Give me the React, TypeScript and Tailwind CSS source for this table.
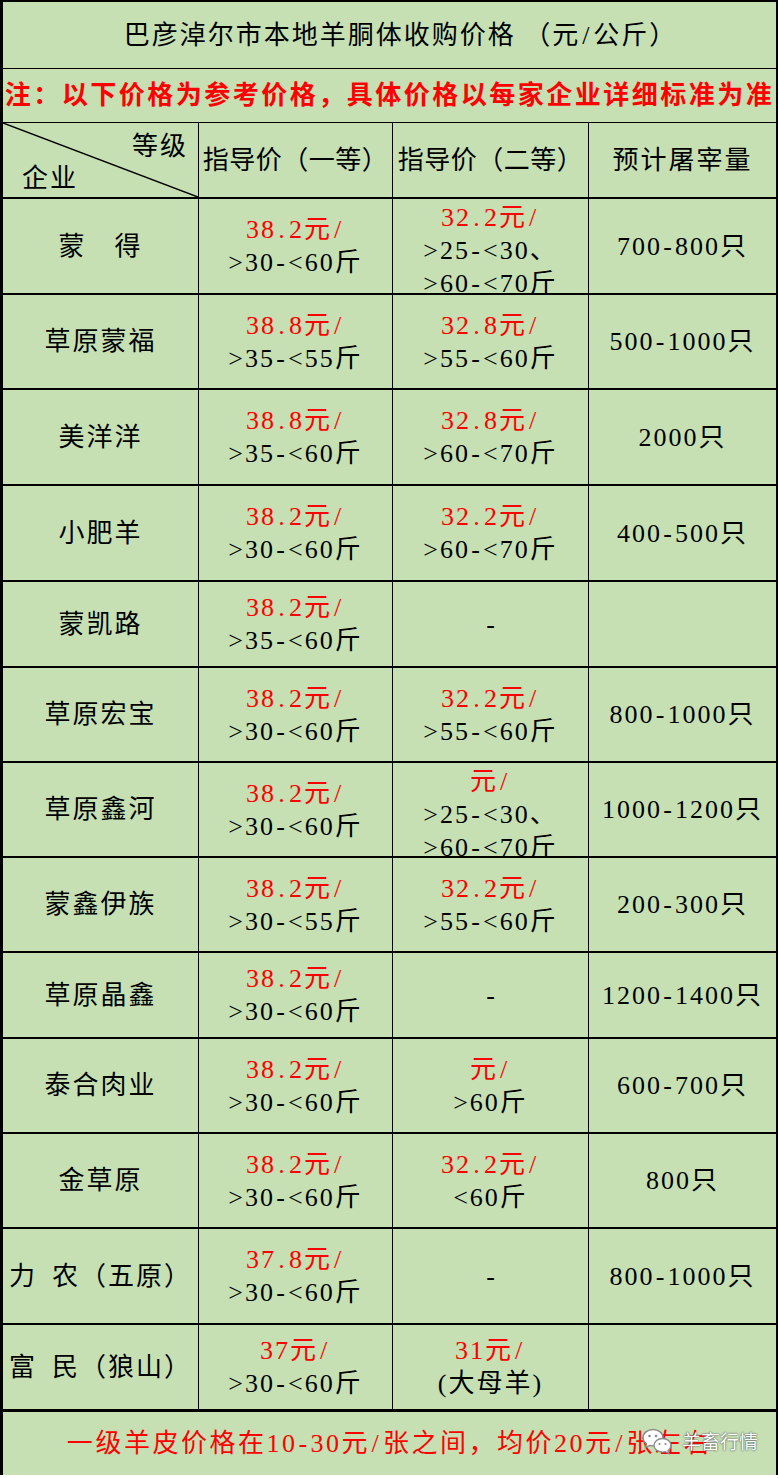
import React from 'react';
import clsx from 'clsx';

type Row = {
    name: string;
    first: string[];
    second: string[] | null; // null → "-"
    qty: string;
    h: string;
    tall?: boolean; // three lines in the second column, overflows the row
    last?: boolean;
};

const rows: Row[] = [
    { name: '蒙　得', first: ['38.2元/', '>30-<60斤'], second: ['32.2元/', '>25-<30、', '>60-<70斤'], qty: '700-800只', h: 'h-[96px]', tall: true },
    { name: '草原蒙福', first: ['38.8元/', '>35-<55斤'], second: ['32.8元/', '>55-<60斤'], qty: '500-1000只', h: 'h-[95px]' },
    { name: '美洋洋', first: ['38.8元/', '>35-<60斤'], second: ['32.8元/', '>60-<70斤'], qty: '2000只', h: 'h-[96px]' },
    { name: '小肥羊', first: ['38.2元/', '>30-<60斤'], second: ['32.2元/', '>60-<70斤'], qty: '400-500只', h: 'h-[96px]' },
    { name: '蒙凯路', first: ['38.2元/', '>35-<60斤'], second: null, qty: '', h: 'h-[86px]' },
    { name: '草原宏宝', first: ['38.2元/', '>30-<60斤'], second: ['32.2元/', '>55-<60斤'], qty: '800-1000只', h: 'h-[95px]' },
    { name: '草原鑫河', first: ['38.2元/', '>30-<60斤'], second: ['元/', '>25-<30、', '>60-<70斤'], qty: '1000-1200只', h: 'h-[95px]', tall: true },
    { name: '蒙鑫伊族', first: ['38.2元/', '>30-<55斤'], second: ['32.2元/', '>55-<60斤'], qty: '200-300只', h: 'h-[95px]' },
    { name: '草原晶鑫', first: ['38.2元/', '>30-<60斤'], second: null, qty: '1200-1400只', h: 'h-[86px]' },
    { name: '泰合肉业', first: ['38.2元/', '>30-<60斤'], second: ['元/', '>60斤'], qty: '600-700只', h: 'h-[95px]' },
    { name: '金草原', first: ['38.2元/', '>30-<60斤'], second: ['32.2元/', '<60斤'], qty: '800只', h: 'h-[95px]' },
    { name: '力\u2002农（五原）', first: ['37.8元/', '>30-<60斤'], second: null, qty: '800-1000只', h: 'h-[96px]' },
    { name: '富\u2002民（狼山）', first: ['37元/', '>30-<60斤'], second: ['31元/', '(大母羊)'], qty: '', h: 'h-[87px]', last: true },
];

const cols = 'grid grid-cols-[196px_194px_196px_187px]';

/* the sheet's font gives . / - a half-em box; widen them the same way */
const Txt: React.FC<{ s: string }> = ({ s }) => (
    <>
        {s.split('').map((c, i) =>
            c === '.' || c === '/' || c === '-' ? (
                <span key={i} className="inline-block w-[13px] text-center">
                    {c}
                </span>
            ) : (
                c
            )
        )}
    </>
);

/* price cell: first line red, the rest black */
const PriceCell: React.FC<{ lines: string[] | null; tall?: boolean }> = ({ lines, tall }) => (
    <div
        className={clsx(
            'flex flex-col items-center overflow-hidden border-r border-black',
            tall ? 'justify-start pt-[2px]' : 'justify-center'
        )}
    >
        {lines === null ? (
            <div className="leading-[33px] text-black">-</div>
        ) : (
            lines.map((l, i) => (
                <div
                    key={i}
                    className={clsx(
                        'whitespace-nowrap leading-[33px] tracking-[2px]',
                        i === 0 ? 'text-[#ff0000]' : 'text-black'
                    )}
                >
                    <Txt s={l} />
                </div>
            ))
        )}
    </div>
);

const WeChatIcon: React.FC = () => (
    <svg width="32" height="28" viewBox="0 0 32 28">
        <path
            d="M11 1.5c5.5 0 10 3.6 10 8.2s-4.5 8.2-10 8.2c-1.2 0-2.3-.2-3.3-.5L3.5 19.5l1-3.6C2.6 14.4 1 12.2 1 9.7 1 5.1 5.5 1.5 11 1.5z"
            fill="#fff"
            stroke="#8a8a8a"
            strokeWidth="1.4"
        />
        <circle cx="7.5" cy="8" r="1.3" fill="#8a8a8a" />
        <circle cx="14" cy="8" r="1.3" fill="#8a8a8a" />
        <path
            d="M20.5 10.5c4.7 0 8.5 3 8.5 6.8 0 2.1-1.2 4-3 5.2l.8 3-3.4-1.8c-.9.3-1.9.4-2.9.4-4.7 0-8.5-3-8.5-6.8s3.8-6.8 8.5-6.8z"
            fill="#fff"
            stroke="#8a8a8a"
            strokeWidth="1.4"
        />
        <circle cx="17.5" cy="16" r="1.1" fill="#8a8a8a" />
        <circle cx="23.5" cy="16" r="1.1" fill="#8a8a8a" />
    </svg>
);

export default function App() {
    return (
        <div className="min-h-[1478px] w-[779px] bg-white font-['Liberation_Serif','Noto_Sans_CJK_SC',serif] text-[26px] text-black">
            <div className="h-[1475px] w-[778px] border-t-2 border-r-2 border-l-[3px] border-black bg-[#c6e0b4]">
                {/* ── Title ── */}
                <div className="flex h-[67px] items-center justify-center border-b border-black pl-[22px] tracking-[2px] whitespace-nowrap">
                    巴彦淖尔市本地羊胴体收购价格 （元<Txt s="/" />公斤）
                </div>

                {/* ── Note ── */}
                <div className="flex h-[54px] items-center justify-center border-b border-black font-bold tracking-[2.5px] whitespace-nowrap text-[#ff0000]">
                    注：以下价格为参考价格，具体价格以每家企业详细标准为准
                </div>

                {/* ── Header ── */}
                <div className={clsx(cols, 'h-[76px] border-b-2 border-black')}>
                    <div className="relative flex flex-col border-r border-black pt-[8px] tracking-[2px]">
                        <svg className="absolute inset-0 h-full w-full" viewBox="0 0 195 74" preserveAspectRatio="none">
                            <line x1="0" y1="0" x2="195" y2="74" stroke="#000" strokeWidth="1.5" />
                        </svg>
                        <span className="relative self-end pr-[10px] leading-[32px]">等级</span>
                        <span className="relative self-start pl-[19px] leading-[32px]">企业</span>
                    </div>
                    <div className="flex items-center justify-center border-r border-black tracking-[0.5px] whitespace-nowrap">
                        指导价（一等）
                    </div>
                    <div className="flex items-center justify-center border-r border-black tracking-[0.5px] whitespace-nowrap">
                        指导价（二等）
                    </div>
                    <div className="flex items-center justify-center tracking-[2px] whitespace-nowrap">预计屠宰量</div>
                </div>

                {/* ── Rows ── */}
                {rows.map(r => (
                    <div
                        key={r.name}
                        className={clsx(cols, r.h, 'border-black', r.last ? 'border-b-[3px]' : 'border-b-2')}
                    >
                        <div className="flex items-center justify-center border-r border-black tracking-[2px] whitespace-nowrap">
                            {r.name}
                        </div>
                        <PriceCell lines={r.first} />
                        <PriceCell lines={r.second} tall={r.tall} />
                        <div className="flex items-center justify-center tracking-[2px] whitespace-nowrap">
                            <Txt s={r.qty} />
                        </div>
                    </div>
                ))}

                {/* ── Footer ── */}
                <div className="relative flex h-[63px] items-center justify-center tracking-[2.5px] whitespace-nowrap text-[#ff0000]">
                    <Txt s="一级羊皮价格在10-30元/张之间，均价20元/张左右" />
                    <div className="absolute top-[16px] left-[639px]">
                        <WeChatIcon />
                    </div>
                    <div className="absolute top-[15px] left-[679px] font-['Noto_Sans_CJK_SC',sans-serif] text-[19px] leading-[28px] tracking-normal text-white [text-shadow:0_0_2px_#555,0_0_1px_#555]">
                        羊畜行情
                    </div>
                </div>
            </div>
        </div>
    );
}
